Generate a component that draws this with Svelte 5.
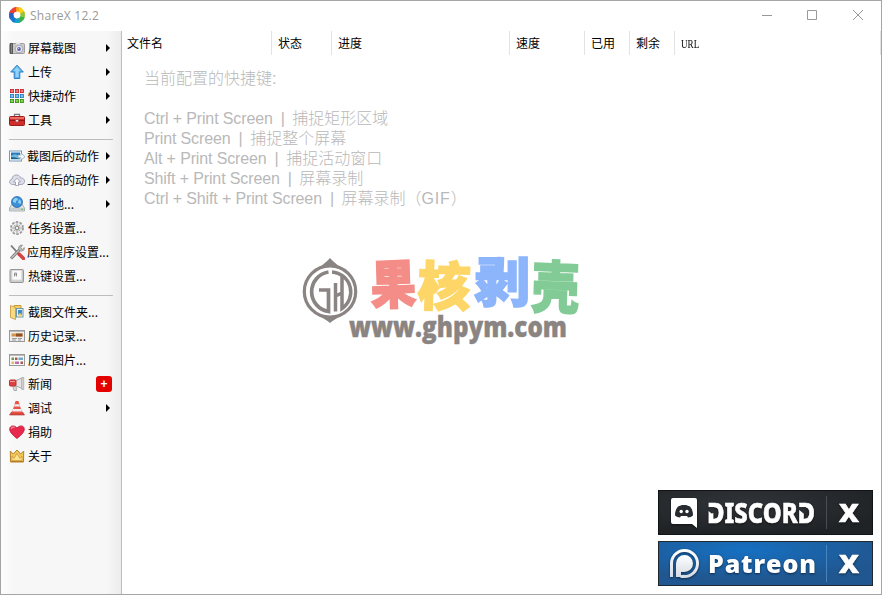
<script>
  const icons = {
    camera: `<rect x="0.5" y="3.5" width="15" height="10" rx="1" fill="#c9c9cb" stroke="#9d9da2"/><path d="M1 3h3v11H1z" fill="#58585b"/><path d="M2 4h1v9H2z" fill="#85858a"/><path d="M7 2.5h4v2H7z" fill="#e6e6e8"/><circle cx="10" cy="9" r="3.8" fill="#ececf2" stroke="#9898a5" stroke-width=".8"/><circle cx="10" cy="9" r="1.900" fill="#5c5f9f"/><circle cx="9.5" cy="8.4" r=".7" fill="#c7c8ff"/>`,
    up: `<path d="M8 1.2 14.3 8H10.800v6.500H5.200V8H1.700z" fill="#5db4ee" stroke="#2d7fc4"/><path d="M8 2.800 11.500 7H9.500v6H6.700V7H4.500z" fill="#92d2fa"/>`,
    grid: `<g stroke-width=".8"><g fill="#ee7777" stroke="#c6202a"><rect x="1.400" y="1.400" width="3.200" height="3.200"/><rect x="6.400" y="1.400" width="3.200" height="3.200"/><rect x="11.400" y="1.400" width="3.200" height="3.200"/></g><g fill="#7dbdf0" stroke="#2677bd"><rect x="1.400" y="6.400" width="3.200" height="3.200"/><rect x="6.400" y="6.400" width="3.200" height="3.200"/><rect x="11.400" y="6.400" width="3.200" height="3.200"/></g><g fill="#80d34e" stroke="#348e10"><rect x="1.400" y="11.400" width="3.200" height="3.200"/><rect x="6.400" y="11.400" width="3.200" height="3.200"/><rect x="11.400" y="11.400" width="3.200" height="3.200"/></g></g>`,
    toolbox: `<path d="M5.500 4.500V2.300h5v2.200" fill="none" stroke="#777" stroke-width="1.300"/><rect x=".5" y="4.500" width="15" height="9" rx="1" fill="#d02c29" stroke="#96201d"/><path d="M1 5h14v2H1z" fill="#ef6a62"/><path d="M0 8h16v1H0z" fill="#8e1916"/><path d="M6.500 7.500h3v2.500h-3z" fill="#f6e8de" stroke="#a55"/>`,
    imageArrow: `<rect x=".5" y="3" width="12" height="10" fill="#fff" stroke="#7697b4"/><path d="M2 4.500h9v4H2z" fill="#2878bc"/><path d="M2 8q5-4 9 1v2.500H2z" fill="#75b8dc"/><path d="M2 9q5 0 9 2H2z" fill="#236285"/><path d="M9 7h3V5l4 3.700-4 3.500v-2.500H9z" fill="#f4fbff" stroke="#84a4b8" stroke-width=".8"/>`,
    cloud: `<path d="M3.500 12.500C-.7 12 .1 7.600 3 7.300 3.100 1.500 11 2 11.500 6c5-.5 5.300 6 1.300 6.500z" fill="#dddde9" stroke="#a5a5b8"/><path d="M8 6.200 11.500 10H9.500v3.500h-3V10h-2z" fill="#fff" stroke="#9696a9" stroke-width=".8"/>`,
    globe: `<path d="M3 8h10l2.500 4v3H.5v-3z" fill="#e0e2e4" stroke="#9da2a7" stroke-width=".8"/><circle cx="8" cy="6" r="5.500" fill="#3b90d8" stroke="#1c609f" stroke-width=".7"/><path d="M4 4q2-3 4-2l1 2-2 1v2L4 6zm6-1 2 2v3l-3-1z" fill="#8fd0f4"/><path d="M1 12h14v2.500H1z" fill="#c9ced1"/><path d="M12 13.300h2" stroke="#3cd537"/>`,
    gear: `<circle cx="8" cy="8" r="5.900" fill="#dadada" stroke="#999" stroke-width="2" stroke-dasharray="2.400 1.300"/><circle cx="8" cy="8" r="4.500" fill="none" stroke="#eee" stroke-width="1.300"/><path d="M8 3v10M3 8h10M4.500 4.500l7 7m0-7-7 7" stroke="#aaa"/><circle cx="8" cy="8" r="1.800" fill="#eee" stroke="#888"/>`,
    tools: `<path d="M2 1.500 12.500 13" stroke="#747474" stroke-width="1.700"/><path d="M2 14.500 10.500 5.700" stroke="#777" stroke-width="3"/><path d="M2.300 14 10.300 6" stroke="#c3c3c3" stroke-width="1.300"/><path d="M10 6.500C8.500 3.500 10.500.5 13.500 1.200L11.700 3.400l1.800 1.800L15.300 3.500C16 6.500 13 8 10 6.500" fill="#b8b8b8" stroke="#777" stroke-width=".6"/><path d="m10 10 4.500 4.500" stroke="#d54242" stroke-width="3.500" stroke-linecap="round"/>`,
    key: `<rect x="1" y="1.500" width="13.500" height="13" rx="1" fill="#cacaca" stroke="#979797"/><rect x="3" y="2.500" width="9.500" height="9.500" rx="1" fill="#fafafa" stroke="#ddd"/><path d="M5.500 8.500v-3.500h2v3.500m-2-1.700h2" fill="none" stroke="#888" stroke-width=".9"/>`,
    folder: `<path d="M5 1.500h7v10H5z" fill="#f2cd68" stroke="#c99a35"/><rect x="7.500" y="4.500" width="6.500" height="8.500" fill="#e8f3fc" stroke="#7194ac"/><path d="M9 6h4v5H9z" fill="#3e8bc8"/><path d="m1.500 1.500 5 2v12l-5-2z" fill="#f6da80" stroke="#c59435" stroke-width=".8"/><path d="M9.500 9.500h3v3h-3z" fill="#e9d46d"/>`,
    history: `<rect x=".5" y="2.500" width="15" height="11" fill="#eee" stroke="#999"/><path d="M1 3h14v1H1z" fill="#bbb"/><path d="M2.500 5.500h11v3h-11z" fill="#d59547"/><path d="M7 5.500h6.500v3H7z" fill="#8e5224"/><path d="M3 10.500h5M3 12h4M9 10.500h4M9 12h3" stroke="#888" stroke-width=".8"/>`,
    images: `<rect x=".5" y="2.500" width="15" height="11" fill="#f8f8f8" stroke="#999"/><path d="M1 3h14v1H1z" fill="#bbb"/><path d="M2.500 5.500H5V8H2.500z" fill="#639a56"/><path d="M6 5.500h2.500V8H6zM11.500 9.500H14V12h-2.500z" fill="#ae5852"/><path d="M9.500 5.500H14V8H9.500z" fill="#6aa9ca"/><path d="M2.500 9.500H5V12H2.500z" fill="#eeb259"/><path d="M6 9.500h4V12H6z" fill="#b870af"/>`,
    news: `<path d="M3.500 9.500h3.500l.5 5H5z" fill="#ddd" stroke="#999" stroke-width=".8"/><path d="M6 5 13 2v10.500L6 9.500z" fill="#e6e6e6" stroke="#aaa"/><path d="M13 1.500h1.700v12H13z" fill="#eee" stroke="#999" stroke-width=".7"/><rect x=".5" y="4" width="6.500" height="6" rx="1" fill="#dc4040" stroke="#b73535"/><path d="M1 5.500h5" stroke="#ff9690"/>`,
    cone: `<path d="M2.500 12h11l2 3H.5z" fill="#d94439" stroke="#a83835" stroke-width=".6"/><path d="M6.600 1h2.800l4 12.500H2.600z" fill="#e95245"/><path d="m5.700 4.300-.8 2.200h6.200l-.8-2.200zm-1.600 4.700-.8 2.500h9.400l-.8-2.500z" fill="#eee"/>`,
    heart: `<path d="M8 14.500C5.500 12.500.7 8.800.7 5.200.7 1.400 5.500.8 8 4c2.500-3.200 7.300-2.600 7.300 1.200 0 3.600-4.800 7.300-7.300 9.300z" fill="#e8294d" stroke="#b81937" stroke-width=".8"/><path d="M2.300 5q.5-2.500 3.500-1.700" fill="none" stroke="#ff8294" stroke-width="1.300"/>`,
    crown: `<path d="m1.300 3 3 3L8 2l3.700 4 3-3-.2 11H1.500z" fill="#f0c65a" stroke="#b88424"/><path d="M3 8 5 10.500l3-5 3 5L13 8v4.500H3z" fill="#ffe38a" stroke="#c9953d" stroke-width=".7"/><path d="M2 13.500h12" stroke="#b37f22"/>`
  };
  const groups = [
    [['camera', '屏幕截图', 1], ['up', '上传', 1], ['grid', '快捷动作', 1], ['toolbox', '工具', 1]],
    [['imageArrow', '截图后的动作', 1], ['cloud', '上传后的动作', 1], ['globe', '目的地...', 1], ['gear', '任务设置...'], ['tools', '应用程序设置...'], ['key', '热键设置...']],
    [['folder', '截图文件夹...'], ['history', '历史记录...'], ['images', '历史图片...'], ['news', '新闻', 2], ['cone', '调试', 1], ['heart', '捐助'], ['crown', '关于']]
  ];
  const columns = [['文件名', 150], ['状态', 60], ['进度', 178], ['速度', 75], ['已用', 45], ['剩余', 45], ['URL', 206]];
  const hotkeys = [
    ['Ctrl + Print Screen', '捕捉矩形区域'], ['Print Screen', '捕捉整个屏幕'],
    ['Alt + Print Screen', '捕捉活动窗口'], ['Shift + Print Screen', '屏幕录制'],
    ['Ctrl + Shift + Print Screen', '屏幕录制（', 'GIF', '）']
  ];
  const swirl = ['#f9a21a', '#fdd20a', '#8cc63e', '#35b34a', '#18a0c4', '#1479d0', '#2a60c8', '#ef3e36'];
</script>

<div class="window">
  <header>
    <svg class="logo" width="16" height="16" viewBox="0 0 16 16">
      {#each swirl as color, i}
        <path d="M7 0C11 0 14 1.500 15.200 4.500Q13 3.500 11 6Q10 4.700 8 4.700z" fill={color} transform={`rotate(${i * 45 - 20} 8 8)`} />
      {/each}
      <circle cx="8" cy="8" r="3.200" fill="#fff" />
    </svg>
    <span class="title">ShareX 12.2</span>
    <svg class="controls" width="102" height="12" viewBox="0 0 102 12" fill="none" stroke="#999">
      <path d="M0 6.500h10M45.500 1.500h9v9h-9zM91 1l10 10M101 1 91 11" />
    </svg>
  </header>
  <div class="body">
    <nav>
      {#each groups as group, g}
        {#if g}<div class="separator"></div>{/if}
        {#each group as [icon, label, end]}
          <div class="item">
            <svg width="16" height="16" viewBox="0 0 16 16">{@html icons[icon]}</svg>
            <span class:long={/^[^.]{6}/.test(label)}>{label}</span>
            {#if end === 1}<i class="arrow"></i>{/if}
            {#if end === 2}<b class="badge">+</b>{/if}
          </div>
        {/each}
      {/each}
    </nav>
    <main>
      <div class="columns">
        {#each columns as [name, width]}
          <div class="column" style:width={`${width}px`}><span class:latin={name === 'URL'}>{name}</span></div>
        {/each}
      </div>
      <div class="hints">
        <p>当前配置的快捷键:</p>
        <p>&nbsp;</p>
        {#each hotkeys as [keys, action, format, tail]}
          <p><span class="keys">{keys}</span><span class="bar">|</span>{action}{#if format}<span class="format">{format}</span>{tail}{/if}</p>
        {/each}
      </div>
      <svg class="watermark" width="290" height="125" viewBox="295 235 290 125">
        <g fill="none" stroke="#8a8482">
          <path d="M313 271Q324 265 330 258Q336 265 347 271Q330 263 313 271M313 313Q324 318 330 323Q336 318 347 313Q330 321 313 313" fill="#8a8482" stroke="none" />
          <circle cx="330" cy="291.500" r="25.700" stroke-width="3.200" />
          <path d="M328.500 272A20 20 0 0 0 328.500 311.500V290H319" stroke-width="3.700" />
          <path d="M332 272A20 20 0 0 1 342 308.500V276M335.500 283V311.500M335.500 296L342 293" stroke-width="3.500" />
        </g>
        <g class="brand" stroke-width="1.500" stroke-linejoin="miter">
          <text transform="translate(371 304.500) scale(.86 1) rotate(-2)" fill="#f48d87" stroke="#f48d87">果</text>
          <text transform="translate(417 305) rotate(2)" fill="#fdd667" stroke="#fdd667">核</text>
          <text transform="translate(474 302) scale(1.060 1)" fill="#8cb5fb" stroke="#8cb5fb">剥</text>
          <text transform="translate(531 307) scale(.9 1.060) rotate(2)" fill="#82cb96" stroke="#82cb96">壳</text>
        </g>
        <text class="url" x="349" y="336.500" textLength="218" lengthAdjust="spacingAndGlyphs">www.ghpym.com</text>
      </svg>
      <div class="banners">
        <svg width="215" height="45" viewBox="0 0 215 45">
          <defs>
            <radialGradient id="dark" cx=".4" cy=".3" r=".7"><stop stop-color="#303438" /><stop offset="1" stop-color="#202326" /></radialGradient>
          </defs>
          <rect x=".5" y=".5" width="214" height="44" fill="url(#dark)" stroke="#111417" />
          <path d="M168.500 6v33" stroke="#4a4e52" />
          <g class="shadow">
            <path d="M15 8h22q2 0 2 2v28l-5-4H15q-2 0-2-2V10q0-2 2-2z" fill="#fff" />
            <path d="M20 16.500l4-1.500h4l4 1.500q3 3 3 9-2 2-5 2l-1-1.500h-6l-1 1.500q-3 0-5-2 0-6 3-9z" fill="#282c30" />
            <circle cx="23.200" cy="21.500" r="1.700" fill="#fff" /><circle cx="29" cy="21.500" r="1.700" fill="#fff" />
            <text class="discord" x="49" y="33" textLength="108" lengthAdjust="spacingAndGlyphs">DISCORD</text>
            <text class="close" x="181" y="32" textLength="20" lengthAdjust="spacingAndGlyphs">X</text>
          </g>
          <path d="M48 17h8v6l-2.500.5L48 19zM140 17h8v6l-2.500.5L140 19z" fill="#2a2e32" />
        </svg>
        <svg width="215" height="45" viewBox="0 0 215 45">
          <defs>
            <radialGradient id="blue" cx=".4" cy=".2" r=".65"><stop stop-color="#1670c2" /><stop offset="1" stop-color="#205791" /></radialGradient>
            <linearGradient id="silver" x2="0" y2="1"><stop stop-color="#fff" /><stop offset="1" stop-color="#d5dce4" /></linearGradient>
          </defs>
          <rect x=".5" y=".5" width="214" height="44" fill="url(#blue)" stroke="#202832" />
          <path d="M168.500 4v37" stroke="#4784bd" />
          <g class="shadow">
            <path d="M13.500 36V22.500a13 13 0 1 1 13 13h-4" fill="none" stroke="url(#silver)" stroke-width="3" />
            <path d="M18 36V22.500a8.500 8.500 0 1 1 8.500 8.500H23v5z" fill="url(#silver)" />
            <text class="patreon" x="50" y="32" textLength="108">Patreon</text>
            <text class="close" x="181" y="32" textLength="20" lengthAdjust="spacingAndGlyphs">X</text>
          </g>
        </svg>
      </div>
    </main>
  </div>
</div>

<style>
  .window { box-sizing: border-box; width: 882px; height: 595px; display: flex; flex-direction: column; background: #fff; border: 1px solid #a5a5a5; font-family: "Noto Sans CJK SC", sans-serif; color: #000; }
  header { height: 30px; flex: none; display: flex; align-items: center; padding: 0 17px 0 8px; box-sizing: border-box; }
  .logo { margin-top: -2px; }
  .title { margin: -1px 0 0 5px; font: 12px "Open Sans", sans-serif; letter-spacing: .28px; color: #999; }
  .controls { margin-left: auto; margin-top: -2px; }
  .body { flex: 1; display: flex; min-height: 0; }
  nav { box-sizing: border-box; width: 121px; padding-top: 5px; border-right: 1px solid #bdbdbd; background: linear-gradient(90deg, #fdfdfd, #f7f7f7 14px, #f7f7f7 106px, #ececec); }
  .item { height: 24px; display: flex; align-items: center; padding: 0 9px 0 8px; font-size: 12px; line-height: 24px; white-space: nowrap; }
  .item svg { flex: none; }
  .item span { margin-left: 3px; }
  .item .long { margin-left: 2px; }
  .arrow { margin-left: auto; margin-right: 2px; border: 4px solid transparent; border-left-color: #000; border-right: 0; }
  .badge { margin-left: auto; width: 16px; height: 16px; border-radius: 3px; background: #e50000; color: #fff; font: bold 12px/17px "Liberation Sans", sans-serif; text-align: center; }
  .separator { height: 12px; box-sizing: border-box; padding-top: 7px; margin: 0 8px; }
  .separator::before { content: ""; display: block; height: 1px; background: #bdbdbd; }
  main { flex: 1; position: relative; min-width: 0; }
  .columns { display: flex; height: 24px; }
  .column { box-sizing: border-box; flex: none; border-right: 1px solid #e3e3e3; padding-left: 5px; font-size: 12px; line-height: 24px; }
  .column + .column { padding-left: 6px; }
  .latin { display: inline-block; font: 12px/24px "Liberation Serif", serif; transform: scaleX(.76); transform-origin: left; }
  .hints { padding: 14px 0 0 22px; color: #b9b9b9; font: 16px/20px "Liberation Sans", "Noto Sans CJK SC", sans-serif; font-weight: 300; }
  .hints p { margin: 0; height: 20px; white-space: nowrap; }
  .keys { letter-spacing: -.13px; }
  .bar { margin: 0 7.500px 0 8px; }
  .format { letter-spacing: .8px; }
  .watermark { position: absolute; left: 173px; top: 204px; }
  .brand { font: 900 53px "Noto Sans CJK SC", sans-serif; }
  .url { font: 800 28px "Open Sans", sans-serif; fill: #8a8482; stroke: #8a8482; stroke-width: .4; }
  .banners { position: absolute; right: 8px; bottom: 8px; display: flex; flex-direction: column; gap: 6px; }
  .shadow { filter: drop-shadow(0 1px 1px #0008); }
  .discord { font: 800 28px "Noto Sans", sans-serif; fill: #fff; stroke: #fff; stroke-width: .6; }
  .patreon { font: 800 25px "Open Sans", sans-serif; fill: #fff; }
  .close { font: 800 25px "Open Sans", sans-serif; fill: #fff; stroke: #fff; stroke-width: .5; }
</style>
